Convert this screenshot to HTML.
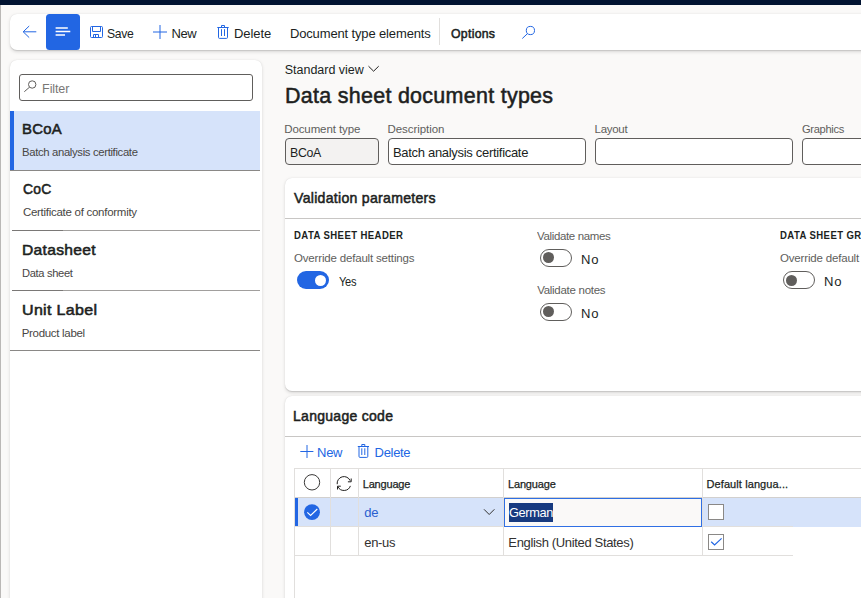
<!DOCTYPE html>
<html><head><meta charset="utf-8">
<style>
*{box-sizing:border-box;margin:0;padding:0}
html,body{width:861px;height:598px;overflow:hidden}
body{background:#faf9f8;font-family:"Liberation Sans",sans-serif;color:#201f1e;position:relative}
.a{position:absolute}
.t{position:absolute;line-height:1;white-space:nowrap;transform-origin:0 0}
svg{position:absolute;overflow:visible}
</style></head><body>
<div class="a" style="left:0;top:0;width:861px;height:5px;background:#011331"></div>
<div class="a" style="left:0;top:5px;width:1px;height:593px;background:#bab8b6"></div>
<!-- toolbar -->
<div class="a" style="left:10px;top:14px;width:870px;height:36px;background:#fff;border-radius:7px;box-shadow:0 1.6px 3.6px rgba(0,0,0,.13),0 0.3px 0.9px rgba(0,0,0,.11)"></div>
<div class="a" style="left:46px;top:14px;width:34px;height:36px;background:#2266e3;border-radius:3.5px"></div>
<div class="a" style="left:439px;top:18px;width:1px;height:27px;background:#e1dfdd"></div>
<!-- left panel -->
<div class="a" style="left:10px;top:60px;width:252px;height:560px;background:#fff;border-radius:7px;box-shadow:0 1.6px 3.6px rgba(0,0,0,.13),0 0.3px 0.9px rgba(0,0,0,.11)"></div>
<div class="a" style="left:19px;top:74px;width:234px;height:27px;border:1px solid #605e5c;border-radius:3px;background:#fff"></div>
<div class="a" style="left:10px;top:111px;width:250px;height:59px;background:#d6e3fa"></div>
<div class="a" style="left:10px;top:111px;width:4px;height:59px;background:#2266e3"></div>
<div class="a" style="left:10px;top:170px;width:250px;height:1px;background:#8a8886"></div>
<div class="a" style="left:12px;top:230px;width:51px;height:1px;background:#7a7876"></div><div class="a" style="left:63px;top:230px;width:197px;height:1px;background:#a19f9d"></div>
<div class="a" style="left:12px;top:290px;width:51px;height:1px;background:#7a7876"></div><div class="a" style="left:63px;top:290px;width:197px;height:1px;background:#a19f9d"></div>
<div class="a" style="left:10px;top:350px;width:250px;height:1px;background:#8a8886"></div>
<!-- fields -->
<div class="a" style="left:285px;top:138px;width:94px;height:27px;border:1px solid #605e5c;border-radius:4px;background:#f3f2f1"></div>
<div class="a" style="left:388px;top:138px;width:198px;height:27px;border:1px solid #605e5c;border-radius:4px;background:#fff"></div>
<div class="a" style="left:595px;top:138px;width:198px;height:27px;border:1px solid #605e5c;border-radius:4px;background:#fff"></div>
<div class="a" style="left:802px;top:138px;width:198px;height:27px;border:1px solid #605e5c;border-radius:4px;background:#fff"></div>
<!-- card 1 -->
<div class="a" style="left:285px;top:178px;width:700px;height:213px;background:#fff;border-radius:7px;box-shadow:0 1.6px 3.6px rgba(0,0,0,.13),0 0.3px 0.9px rgba(0,0,0,.11)"></div>
<div class="a" style="left:285px;top:218px;width:700px;height:1px;background:#c8c6c4"></div>
<div class="a" style="left:297px;top:271px;width:32px;height:18px;border-radius:9px;background:#2266e3"></div>
<div class="a" style="left:314.5px;top:274.5px;width:11px;height:11px;border-radius:50%;background:#fff"></div>
<div class="a" style="left:540px;top:249px;width:32px;height:18px;border-radius:9px;border:1px solid #605e5c;background:#fff"></div>
<div class="a" style="left:543px;top:252px;width:11px;height:11px;border-radius:50%;background:#605e5c"></div>
<div class="a" style="left:540px;top:303px;width:32px;height:18px;border-radius:9px;border:1px solid #605e5c;background:#fff"></div>
<div class="a" style="left:543px;top:306px;width:11px;height:11px;border-radius:50%;background:#605e5c"></div>
<div class="a" style="left:783px;top:271px;width:32px;height:18px;border-radius:9px;border:1px solid #605e5c;background:#fff"></div>
<div class="a" style="left:786px;top:274.5px;width:11px;height:11px;border-radius:50%;background:#605e5c"></div>
<!-- card 2 -->
<div class="a" style="left:285px;top:396px;width:700px;height:260px;background:#fff;border-radius:7px;box-shadow:0 1.6px 3.6px rgba(0,0,0,.13),0 0.3px 0.9px rgba(0,0,0,.11)"></div>
<div class="a" style="left:285px;top:436px;width:700px;height:1px;background:#c8c6c4"></div>
<!-- grid -->
<div class="a" style="left:294px;top:468px;width:600px;height:1px;background:#e1dfdd"></div>
<div class="a" style="left:294px;top:468px;width:1px;height:140px;background:#e1dfdd"></div>
<div class="a" style="left:295px;top:497px;width:600px;height:30px;background:#d6e3fa"></div>
<div class="a" style="left:295px;top:498px;width:3px;height:28px;background:#2266e3"></div>
<div class="a" style="left:295px;top:497px;width:600px;height:1px;background:#d2d0ce"></div>
<div class="a" style="left:295px;top:526px;width:498px;height:1px;background:#e1dfdd"></div>
<div class="a" style="left:295px;top:555px;width:498px;height:1px;background:#e1dfdd"></div>
<div class="a" style="left:330px;top:469px;width:1px;height:86px;background:#e1dfdd"></div>
<div class="a" style="left:358px;top:469px;width:1px;height:86px;background:#e1dfdd"></div>
<div class="a" style="left:503px;top:469px;width:1px;height:86px;background:#e1dfdd"></div>
<div class="a" style="left:702px;top:469px;width:1px;height:86px;background:#e1dfdd"></div>
<div class="a" style="left:504px;top:498px;width:198px;height:29px;border:1px solid #2f6fe4;background:#faf9f8"></div>
<div class="a" style="left:509px;top:503px;width:44px;height:19px;background:#173a80"></div>
<div class="a" style="left:708px;top:504px;width:16px;height:16px;border:1.5px solid #8a8886;background:#fff"></div>
<div class="a" style="left:708px;top:534px;width:16px;height:16px;border:1.5px solid #8a8886;background:#fff"></div>

<div class="t" style="left:107.00px;top:27.0px;font-size:13px;letter-spacing:-0.350px;transform:scaleX(0.9351);">Save</div>
<div class="t" style="left:171.40px;top:27.0px;font-size:13px;letter-spacing:-0.350px;">New</div>
<div class="t" style="left:234.00px;top:27.0px;font-size:13px;letter-spacing:-0.080px;">Delete</div>
<div class="t" style="left:289.90px;top:27.0px;font-size:13px;letter-spacing:-0.138px;">Document type elements</div>
<div class="t" style="left:450.90px;top:27.0px;font-size:13px;-webkit-text-stroke:0.55px currentColor;letter-spacing:0.300px;transform:scaleX(0.9444);">Options</div>
<div class="t" style="left:42.10px;top:83.0px;font-size:12.5px;color:#797775;letter-spacing:-0.100px;">Filter</div>
<div class="t" style="left:21.60px;top:121.0px;font-size:15px;-webkit-text-stroke:0.55px currentColor;letter-spacing:0.300px;transform:scaleX(0.9925);">BCoA</div>
<div class="t" style="left:21.60px;top:147.0px;font-size:11.5px;color:#484644;letter-spacing:-0.350px;transform:scaleX(0.9841);">Batch analysis certificate</div>
<div class="t" style="left:22.90px;top:181.0px;font-size:15px;-webkit-text-stroke:0.55px currentColor;letter-spacing:0.300px;transform:scaleX(0.9248);">CoC</div>
<div class="t" style="left:22.90px;top:207.0px;font-size:11.5px;color:#484644;letter-spacing:-0.275px;">Certificate of conformity</div>
<div class="t" style="left:21.70px;top:242.0px;font-size:15px;-webkit-text-stroke:0.55px currentColor;letter-spacing:0.300px;transform:scaleX(1.0412);">Datasheet</div>
<div class="t" style="left:21.70px;top:268.0px;font-size:11.5px;color:#484644;letter-spacing:-0.350px;transform:scaleX(0.9701);">Data sheet</div>
<div class="t" style="left:21.70px;top:302.0px;font-size:15px;-webkit-text-stroke:0.55px currentColor;letter-spacing:0.300px;transform:scaleX(1.0670);">Unit Label</div>
<div class="t" style="left:21.70px;top:328.0px;font-size:11.5px;color:#484644;letter-spacing:-0.308px;">Product label</div>
<div class="t" style="left:284.80px;top:64.0px;font-size:12.5px;letter-spacing:-0.025px;">Standard view</div>
<div class="t" style="left:284.80px;top:85.0px;font-size:22.5px;-webkit-text-stroke:0.55px currentColor;letter-spacing:0.300px;transform:scaleX(0.9536);">Data sheet document types</div>
<div class="t" style="left:284.20px;top:124.0px;font-size:11.5px;color:#605e5c;letter-spacing:-0.100px;">Document type</div>
<div class="t" style="left:387.40px;top:124.0px;font-size:11.5px;color:#605e5c;letter-spacing:-0.050px;">Description</div>
<div class="t" style="left:594.60px;top:124.0px;font-size:11.5px;color:#605e5c;letter-spacing:-0.300px;">Layout</div>
<div class="t" style="left:802.00px;top:124.0px;font-size:11.5px;color:#605e5c;letter-spacing:-0.350px;transform:scaleX(0.9690);">Graphics</div>
<div class="t" style="left:289.60px;top:146.0px;font-size:13px;letter-spacing:-0.350px;transform:scaleX(0.9484);">BCoA</div>
<div class="t" style="left:393.00px;top:146.0px;font-size:13px;letter-spacing:-0.308px;">Batch analysis certificate</div>
<div class="t" style="left:294.20px;top:190.0px;font-size:15px;-webkit-text-stroke:0.55px currentColor;letter-spacing:0.300px;transform:scaleX(0.9391);">Validation parameters</div>
<div class="t" style="left:294.00px;top:230.0px;font-size:11.5px;font-weight:bold;letter-spacing:0.500px;transform:scaleX(0.8308);">DATA SHEET HEADER</div>
<div class="t" style="left:294.00px;top:253.0px;font-size:11.5px;color:#605e5c;letter-spacing:-0.175px;">Override default settings</div>
<div class="t" style="left:338.70px;top:275.0px;font-size:13px;letter-spacing:-0.350px;transform:scaleX(0.8522);">Yes</div>
<div class="t" style="left:537.00px;top:231.0px;font-size:11.5px;color:#605e5c;letter-spacing:-0.350px;transform:scaleX(0.9993);">Validate names</div>
<div class="t" style="left:581.30px;top:253.0px;font-size:13px;letter-spacing:0.900px;transform:scaleX(1.0063);">No</div>
<div class="t" style="left:537.20px;top:285.0px;font-size:11.5px;color:#605e5c;letter-spacing:-0.285px;">Validate notes</div>
<div class="t" style="left:581.30px;top:307.0px;font-size:13px;letter-spacing:0.900px;transform:scaleX(1.0063);">No</div>
<div class="t" style="left:780.00px;top:230.0px;font-size:11.5px;font-weight:bold;letter-spacing:0.500px;transform:scaleX(0.8308);">DATA SHEET GROUP</div>
<div class="t" style="left:780.00px;top:253.0px;font-size:11.5px;color:#605e5c;letter-spacing:-0.175px;">Override default settings</div>
<div class="t" style="left:824.00px;top:275.0px;font-size:13px;letter-spacing:0.900px;transform:scaleX(1.0063);">No</div>
<div class="t" style="left:293.10px;top:408.0px;font-size:15px;-webkit-text-stroke:0.55px currentColor;letter-spacing:0.300px;transform:scaleX(0.9337);">Language code</div>
<div class="t" style="left:317.00px;top:446.0px;font-size:13px;color:#2266e3;letter-spacing:-0.250px;">New</div>
<div class="t" style="left:374.60px;top:446.0px;font-size:13px;color:#2266e3;letter-spacing:-0.320px;">Delete</div>
<div class="t" style="left:362.70px;top:479.0px;font-size:11px;-webkit-text-stroke:0.25px currentColor;letter-spacing:-0.171px;">Language</div>
<div class="t" style="left:508.00px;top:479.0px;font-size:11px;-webkit-text-stroke:0.25px currentColor;letter-spacing:-0.171px;">Language</div>
<div class="t" style="left:706.50px;top:479.0px;font-size:11px;-webkit-text-stroke:0.25px currentColor;letter-spacing:0.094px;">Default langua...</div>
<div class="t" style="left:364.30px;top:506.0px;font-size:13px;color:#2a5fd0;letter-spacing:-0.300px;">de</div>
<div class="t" style="left:508.50px;top:506.0px;font-size:13px;color:#fff;letter-spacing:-0.350px;transform:scaleX(0.9827);">German</div>
<div class="t" style="left:364.30px;top:536.0px;font-size:13px;color:#323130;letter-spacing:-0.325px;">en-us</div>
<div class="t" style="left:508.30px;top:536.0px;font-size:13px;color:#323130;letter-spacing:-0.341px;">English (United States)</div>
<svg style="left:0;top:0" width="861" height="598">
  <g stroke="#2266e3" fill="none" stroke-width="1">
    <path d="M29.2 26 L23.2 31.8 L29.2 37.6 M23.2 31.8 H36.3"/>
  </g>
  <g stroke="#fff" stroke-width="1.3" fill="none">
    <path d="M55.6 28 H67.8 M55.6 31.5 H70.3 M55.6 35 H65"/>
  </g>
  <g fill="none" stroke="#2266e3" stroke-width="1">
    <rect x="90.5" y="26.5" width="12" height="11" rx="1"/>
    <path d="M92.5 26.5 V31.5 H100.5 V26.5 M93.5 37.5 V34.5 H98.5 V37.5 M95.5 35 V37.5"/>
    <path d="M153 32 H167 M160 25 V39"/>
    <path d="M217.3 27.5 H228.7 M221.5 27.5 V25.5 H224.5 V27.5 M218.5 27.5 V37.4 Q218.5 38.4 219.5 38.4 H226.5 Q227.5 38.4 227.5 37.4 V27.5 M221.5 29.2 V36 M224.5 29.2 V36"/>
    <circle cx="530.4" cy="30.5" r="4.1"/>
    <path d="M527.5 33.6 L522.3 38.5"/>
    <path d="M300.3 451.5 H313.4 M307 445 V458"/>
    <path d="M357.8 446.5 H369 M361.8 446.5 V444.5 H364.8 V446.5 M359 446.5 V456.4 Q359 457.4 360 457.4 H366.8 Q367.8 457.4 367.8 456.4 V446.5 M361.8 448.3 V455 M364.8 448.3 V455"/>
  </g>
  <path d="M368.5 66.2 L373.6 71.2 L378.7 66.2" fill="none" stroke="#201f1e" stroke-width="1"/>
  <g fill="none" stroke="#605e5c" stroke-width="1">
    <circle cx="32.2" cy="84.5" r="3.7"/>
    <path d="M29.5 87.2 L24.3 91.7"/>
  </g>
  <circle cx="312" cy="482.3" r="7.7" fill="none" stroke="#3b3a39" stroke-width="1"/>
  <g fill="none" stroke="#201f1e" stroke-width="1">
    <path d="M337.2 484.2 A6.8 6.8 0 0 1 350.2 480.7"/>
    <path d="M347.9 481.8 H351.2 V478.5"/>
    <path d="M350.4 485.9 A6.8 6.8 0 0 1 337.8 486.5"/>
    <path d="M340.8 486.2 H337.5 V489.5"/>
  </g>
  <circle cx="312" cy="512.2" r="7.9" fill="#2266e3"/>
  <path d="M307.3 512.3 L310.6 515.5 L317.3 509" fill="none" stroke="#fff" stroke-width="1.1"/>
  <path d="M484 509.3 L489.2 514.5 L494.4 509.3" fill="none" stroke="#323130" stroke-width="1"/>
  <path d="M711.2 541.7 L714.6 545 L721.6 538.4" fill="none" stroke="#2266e3" stroke-width="1.2"/>
</svg>

</body></html>
